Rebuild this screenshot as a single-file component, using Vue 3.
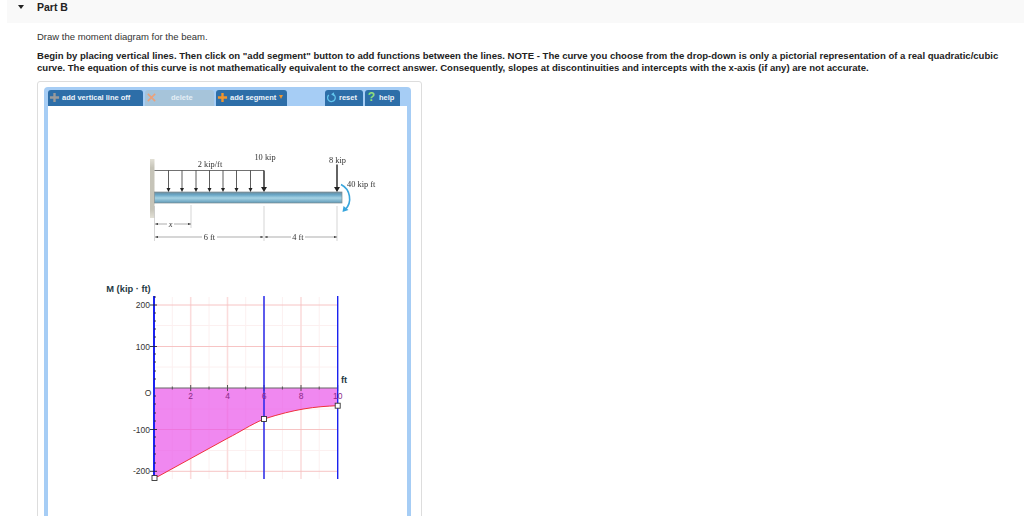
<script setup>
const loadArrows = [168.5, 182, 196, 209.5, 223, 236.5, 250.5]
const xTicks = [
  { x: 190.7, label: '2' },
  { x: 227.5, label: '4' },
  { x: 264, label: '6' },
  { x: 301, label: '8' },
  { x: 337.7, label: '10' }
]
const minorX = [172.3, 209, 245.7, 282.4, 319.2]
const yMajor = [
  { y: 305, label: '200' },
  { y: 346.5, label: '100' },
  { y: 429.5, label: '-100' },
  { y: 471.3, label: '-200' }
]
const yMinor = [325.5, 367, 409, 450.5]
const yTicks = [297, 313, 321, 329, 337, 354, 362, 371, 379, 396, 404, 413, 421, 437, 446, 454, 463]
const handles = [
  { x: 154.5, y: 478 },
  { x: 264, y: 419 },
  { x: 337.7, y: 405.7 }
]
</script>

<template>
  <div class="page">
    <div class="part-head">
      <span class="caret"></span>
      <span class="part-title">Part B</span>
    </div>
    <div class="part-body">
      <p class="intro">Draw the moment diagram for the beam.</p>
      <p class="note">
        Begin by placing vertical lines. Then click on "add segment" button to add functions between the lines. NOTE - The curve you choose from the drop-down is only a pictorial representation of a real quadratic/cubic<br />
        curve. The equation of this curve is not mathematically equivalent to the correct answer. Consequently, slopes at discontinuities and intercepts with the x-axis (if any) are not accurate.
      </p>
      <div class="tool-frame">
        <div class="tool-blue">
          <div class="toolbar">
            <button class="tool-btn w-line">
              <svg class="ico" viewBox="0 0 12 12"><path d="M6 1v10M1 6h10" stroke="#9a9a9a" stroke-width="2.6" /></svg>
              add vertical line off
            </button>
            <button class="tool-btn w-delete off">
              <svg class="ico" viewBox="0 0 12 12"><path d="M2 2l8 8M10 2l-8 8" stroke="#eaa27c" stroke-width="1.8" /></svg>
              <span class="delete-label">delete</span>
            </button>
            <button class="tool-btn w-seg">
              <svg class="ico" viewBox="0 0 12 12"><path d="M6 1v10M1 6h10" stroke="#f0952e" stroke-width="2.6" /></svg>
              add segment
              <span class="drop"></span>
            </button>
            <span class="spacer"></span>
            <button class="tool-btn w-reset">
              <svg class="ico" viewBox="0 0 12 12"><path d="M3 3.2A4.2 4.2 0 1 0 7.4 2.3" fill="none" stroke="#62c6ee" stroke-width="1.4" /><path d="M8.8 0.2L5.6 2.4l3 2.2z" fill="#62c6ee" /></svg>
              reset
            </button>
            <button class="tool-btn w-help">
              <span class="qmark">?</span>
              help
            </button>
          </div>
          <div class="canvas">
            <!-- viewBox uses page coordinates so numbers line up with the screenshot -->
            <svg class="beam" viewBox="48 107 359 150" width="359" height="150">
              <defs>
                <linearGradient id="wallFade" x1="0" y1="0" x2="0" y2="1">
                  <stop offset="0" stop-color="#e2e0d6" />
                  <stop offset="0.15" stop-color="#c6c4b8" />
                  <stop offset="0.85" stop-color="#c6c4b8" />
                  <stop offset="1" stop-color="#e2e0d6" />
                </linearGradient>
                <linearGradient id="beamShade" x1="0" y1="0" x2="0" y2="1">
                  <stop offset="0" stop-color="#6d8c9c" />
                  <stop offset="0.25" stop-color="#68a6c6" />
                  <stop offset="0.55" stop-color="#a6d3e4" />
                  <stop offset="1" stop-color="#5f9ab8" />
                </linearGradient>
              </defs>
              <rect x="150" y="159" width="4.5" height="59" fill="url(#wallFade)" />
              <rect x="154.5" y="192" width="187.5" height="11" fill="url(#beamShade)" stroke="#7f8c90" stroke-width="0.7" />
              <path d="M154.5 170.5H264" stroke="#333" stroke-width="0.7" />
              <g v-for="x in loadArrows" :key="x">
                <path :d="`M${x} 170.5V189`" stroke="#333" stroke-width="0.8" />
                <path :d="`M${x - 2} 188h4l-2 4z`" fill="#222" />
              </g>
              <path d="M264 170.5V188" stroke="#222" stroke-width="1.4" />
              <path d="M261 187h6l-3 5z" fill="#222" />
              <path d="M337 164.5V188" stroke="#222" stroke-width="1.4" />
              <path d="M334 187h6l-3 5z" fill="#222" />
              <path d="M341 184.5C350 189 353 202 345 210" fill="none" stroke="#38a5dc" stroke-width="1.6" />
              <path d="M342.5 212l1-6 5 4z" fill="#38a5dc" />
              <g stroke="#bbb" stroke-width="0.6" fill="none">
                <path d="M154.5 206V241M191 205V228M264 206V241M337 206V241" />
                <path d="M155 224H167M174 224H191M155 237H202M217 237H263M265 237H291M305 237H337" stroke="#777" />
              </g>
              <path d="M155 237l3-1v2zM263.5 237l-3-1v2zM264.5 237l3-1v2zM337 237l-3-1v2zM155 224l3-1v2zM191 224l-3-1v2z" fill="#333" />
              <text x="210" y="167" class="serif" text-anchor="middle">2 kip/ft</text>
              <text x="265" y="160" class="serif" text-anchor="middle">10 kip</text>
              <text x="337.5" y="163" class="serif" text-anchor="middle">8 kip</text>
              <text x="347" y="187" class="serif">40 kip ft</text>
              <text x="170.5" y="227" class="serif ital" text-anchor="middle">x</text>
              <text x="209.5" y="239.5" class="serif" text-anchor="middle">6 ft</text>
              <text x="298" y="239.5" class="serif" text-anchor="middle">4 ft</text>
            </svg>
            <svg class="chart" viewBox="48 257 359 259" width="359" height="259">
              <!-- grid -->
              <g stroke="#fcf0f0" stroke-width="1">
                <path v-for="x in minorX" :key="x" :d="`M${x} 297V479`" />
                <path v-for="y in yMinor" :key="y" :d="`M154 ${y}H337`" />
              </g>
              <g stroke="#fbdcdc" stroke-width="1.6">
                <path v-for="t in xTicks.slice(0, 4)" :key="t.x" :d="`M${t.x} 297V479`" />
              </g>
              <g stroke="#f6bdbd" stroke-width="0.9">
                <path v-for="t in yMajor" :key="t.y" :d="`M154 ${t.y}H337`" />
              </g>
              <!-- moment area -->
              <path d="M154.5 388H337.7V405.7C315 406.5 295 409 264 419C250 425 240 432 228 438L158 476.5L154.5 477Z" fill="#ea55e9" fill-opacity="0.7" />
              <path d="M154.5 477L158 476.5L228 438C240 432 250 425 264 419C295 409 315 406.5 337.7 405.7" fill="none" stroke="#f0323c" stroke-width="1" />
              <!-- axes -->
              <path d="M154 388H337.7" stroke="#666" stroke-width="1.2" />
              <g stroke="#555" stroke-width="1">
                <path v-for="t in xTicks" :key="t.x" :d="`M${t.x} 385V391`" />
                <path v-for="x in minorX" :key="x" :d="`M${x} 386.5V389.5`" />
              </g>
              <path d="M154 296V479" stroke="#1a22f0" stroke-width="2" />
              <path d="M264 296V479M337.7 296V479" stroke="#1a22f0" stroke-width="1.4" />
              <g stroke="#223" stroke-width="0.9">
                <path v-for="y in yTicks" :key="y" :d="`M154 ${y}H156`" />
                <path v-for="t in yMajor" :key="t.y" :d="`M150 ${t.y}H157`" />
              </g>
              <!-- labels -->
              <text x="128.5" y="292" class="axis-name" text-anchor="middle">M (kip · ft)</text>
              <text x="341" y="383" class="axis-name">ft</text>
              <text v-for="t in yMajor" :key="t.label" x="150" :y="t.y + 3" class="num" text-anchor="end">{{ t.label }}</text>
              <text x="148" y="396" class="num" text-anchor="middle">O</text>
              <text v-for="t in xTicks" :key="t.label" :x="t.x" y="399" class="num tick-label" text-anchor="middle">{{ t.label }}</text>
              <rect v-for="h in handles" :key="h.x" :x="h.x - 2.5" :y="h.y - 2.5" width="5" height="5" fill="#fff" stroke="#333" stroke-width="0.9" />
            </svg>
          </div>
        </div>
      </div>
    </div>
  </div>
</template>

<style>
html, body {
  background: #fff;
}
</style>

<style scoped>
.page {
  width: 1024px;
  height: 516px;
  overflow: hidden;
  font-family: "Liberation Sans", Arial, sans-serif;
  color: #222;
}
.part-head {
  margin-left: 7px;
  height: 23px;
  background: #f9f9f9;
  display: flex;
  align-items: flex-start;
  padding-top: 1px;
  box-sizing: border-box;
}
.caret {
  width: 0;
  height: 0;
  margin: 4px 0 0 11px;
  border-left: 3.5px solid transparent;
  border-right: 3.5px solid transparent;
  border-top: 4px solid #222;
}
.part-title {
  margin-left: 13px;
  font-size: 10.5px;
  line-height: 12px;
  font-weight: 700;
}
.part-body {
  padding-left: 37px;
}
.intro {
  margin: 8px 0 0;
  font-size: 9.5px;
  line-height: 12px;
  color: #333;
}
.note {
  margin: 7px 0 0;
  font-size: 9.55px;
  line-height: 12px;
  font-weight: 700;
  white-space: nowrap;
}
.tool-frame {
  margin-top: 7px;
  width: 385px;
  height: 460px;
  box-sizing: border-box;
  border: 1px solid #ddd;
  border-radius: 3px;
  padding: 5px 10px 0 6px;
}
.tool-blue {
  background: #a6cdf5;
  border-radius: 4px 4px 0 0;
  padding: 3px 4px 0;
}
.toolbar {
  display: flex;
  height: 16px;
  gap: 2px;
}
.tool-btn {
  display: flex;
  align-items: center;
  gap: 2px;
  height: 16px;
  box-sizing: border-box;
  padding: 0 0 2px 1px;
  border: 0;
  border-radius: 3px 3px 0 0;
  background: #2d6ea8;
  color: #eef4fa;
  font-family: "Liberation Sans", Arial, sans-serif;
  font-size: 7.5px;
  font-weight: 700;
  white-space: nowrap;
}
.tool-btn.off {
  background: #a6c4da;
  color: #e4eef5;
}
.w-line { width: 95px; }
.w-delete { width: 69px; }
.w-seg { width: 71px; }
.w-reset { width: 38px; margin-left: auto; }
.w-help { width: 35px; margin-right: 7px; }
.spacer { flex: 1; }
.ico {
  width: 11px;
  height: 11px;
  flex: none;
}
.delete-label {
  margin-left: 12px;
}
.drop {
  width: 0;
  height: 0;
  margin-left: 1px;
  border-left: 2.5px solid transparent;
  border-right: 2.5px solid transparent;
  border-top: 4px solid #f0952e;
}
.qmark {
  width: 11px;
  text-align: center;
  font-size: 12px;
  color: #8fe07a;
}
.canvas {
  background: #fff;
  height: 410px;
  padding-top: 1px;
}
.beam, .chart {
  display: block;
}
.beam {
  filter: blur(0.3px);
}
.serif {
  font-family: "Liberation Serif", "Times New Roman", serif;
  font-size: 8.4px;
  fill: #333;
}
.ital {
  font-style: italic;
}
.axis-name {
  font-family: "Liberation Sans", Arial, sans-serif;
  font-size: 9.3px;
  font-weight: 700;
  fill: #1f3a44;
}
.num {
  font-family: "Liberation Sans", Arial, sans-serif;
  font-size: 8.5px;
  fill: #333;
}
.tick-label {
  fill: #8a2a8a;
}
</style>
